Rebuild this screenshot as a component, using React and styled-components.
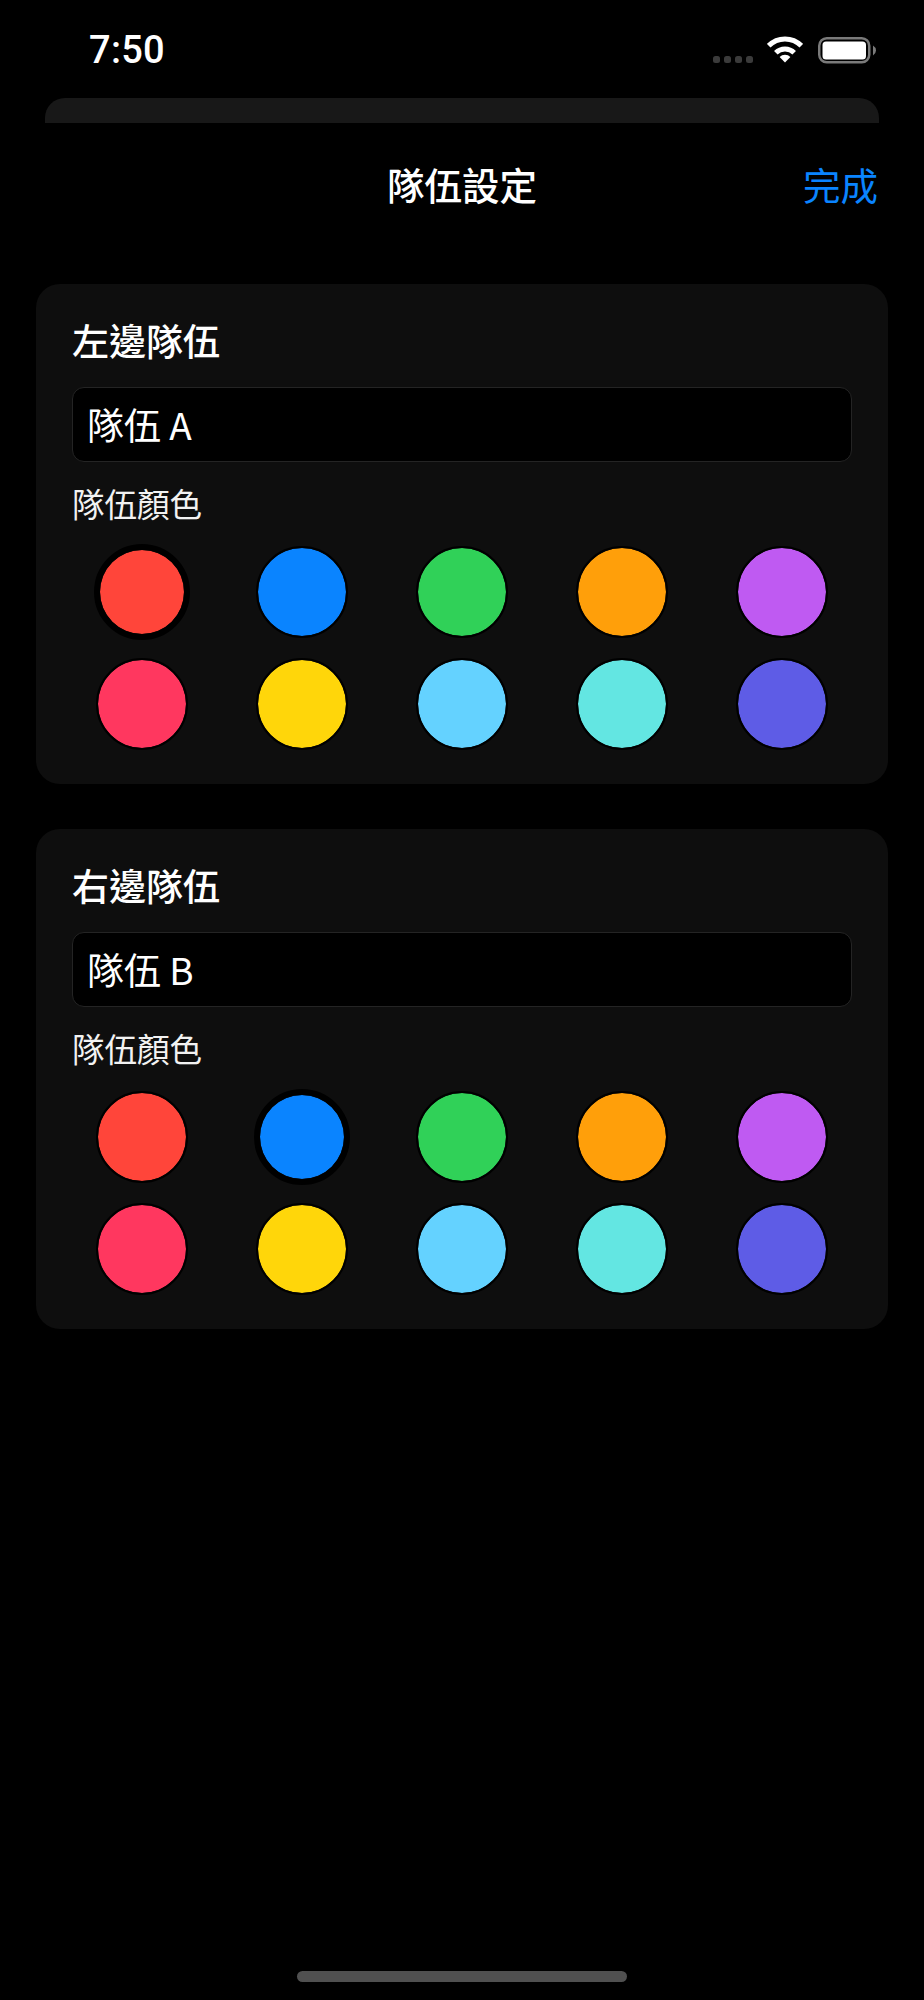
import React from "react";
import styled, { createGlobalStyle } from "styled-components";

const Global = createGlobalStyle`
  html, body { margin: 0; padding: 0; background: #000; }
  body { font-family: "Noto Sans CJK TC", "Noto Sans", sans-serif; color: #fff; }
  * { box-sizing: border-box; }
`;

const Screen = styled.div`
  width: 924px;
  height: 2000px;
  background: #000;
  display: flex;
  flex-direction: column;
`;

const StatusBar = styled.div`
  height: 98px;
  padding: 36px 48px 0 89px;
  display: flex;
  align-items: flex-start;
  justify-content: space-between;
`;

const Time = styled.div`
  font-family: "Roboto", "Liberation Sans", sans-serif;
  font-size: 38px;
  font-weight: 500;
  line-height: 28px;
  letter-spacing: 0.3px;
`;

const StatusIcons = styled.div`
  display: flex;
  align-items: flex-start;
`;

const SignalDots = styled.div`
  display: flex;
  gap: 3.5px;
  margin: 19.5px 14px 0 0;
`;

const SignalDot = styled.span`
  width: 7.5px;
  height: 7.5px;
  border-radius: 2.5px;
  background: #3b3b3b;
`;

const WifiIcon = styled.svg`
  display: block;
  width: 36px;
  height: 27px;
  margin-right: 15px;
`;

const BatteryIcon = styled.svg`
  display: block;
  width: 58px;
  height: 27px;
  margin-top: 1px;
`;

const SheetEdge = styled.div`
  height: 25px;
  margin: 0 45px;
  background: #181818;
  border-radius: 20px 20px 0 0;
`;

const Header = styled.header`
  height: 124px;
  padding: 0 46px 3px;
  display: grid;
  grid-template-columns: 1fr auto 1fr;
  align-items: center;
`;

const Title = styled.h1`
  margin: 0;
  font-size: 37.5px;
  font-weight: 500;
  line-height: 46px;
`;

const DoneButton = styled.button`
  justify-self: end;
  padding: 0;
  border: 0;
  background: none;
  font-family: inherit;
  font-size: 37.5px;
  font-weight: 400;
  line-height: 46px;
  color: #0a84ff;
`;

const Content = styled.main`
  padding: 37px 36px 0;
  display: flex;
  flex-direction: column;
  gap: 45px;
`;

const Card = styled.section`
  height: 500px;
  padding: 33px 36px 35px;
  background: #0e0e0e;
  border-radius: 24px;
`;

const CardTitle = styled.h2`
  margin: 0 0 24px;
  font-size: 37px;
  font-weight: 500;
  line-height: 46px;
`;

const NameField = styled.div`
  height: 75px;
  padding: 0 14px 2px;
  display: flex;
  align-items: center;
  background: #000;
  border: 1px solid #242424;
  border-radius: 12px;
  font-size: 37px;
  font-weight: 400;
  line-height: 46px;
`;

const ColorLabel = styled.div`
  margin: 19px 0 22px;
  font-size: 32.5px;
  font-weight: 400;
  line-height: 44px;
  color: #f2f2f2;
`;

const Swatches = styled.div`
  display: grid;
  grid-template-columns: repeat(5, 140px);
  grid-auto-rows: 90px;
  column-gap: 20px;
  row-gap: 22px;
`;

const Swatch = styled.button`
  justify-self: center;
  align-self: center;
  padding: 0;
  width: ${(p) => (p.$selected ? "96px" : "92px")};
  height: ${(p) => (p.$selected ? "96px" : "92px")};
  border-radius: 50%;
  border: ${(p) => (p.$selected ? "6.5px" : "2.5px")} solid #000;
  background: ${(p) => p.$color};
  background-clip: padding-box;
`;

const HomeIndicator = styled.div`
  width: 330px;
  height: 11px;
  margin: auto auto 18px;
  background: #505050;
  border-radius: 6px;
`;

const COLORS = [
  "#ff453a", "#0a84ff", "#30d158", "#ff9f0a", "#bf5af2",
  "#ff375f", "#ffd60a", "#64d2ff", "#63e6e2", "#5e5ce6",
];

const TEAMS = [
  { side: "左邊隊伍", name: "隊伍 A", selected: 0 },
  { side: "右邊隊伍", name: "隊伍 B", selected: 1 },
];

function Wifi() {
  return (
    <WifiIcon viewBox="0 0 36 27">
      <g fill="none" stroke="#fff" strokeWidth="5">
        <path d="M1.7 9.7 A23 23 0 0 1 34.3 9.7" />
        <path d="M8.8 16.8 A13 13 0 0 1 27.2 16.8" />
      </g>
      <path d="M18 26.5 L12.6 21 A7.6 7.6 0 0 1 23.4 21 Z" fill="#fff" />
    </WifiIcon>
  );
}

function Battery() {
  return (
    <BatteryIcon viewBox="0 0 58 27">
      <rect x="1.25" y="1.25" width="50" height="24" rx="7.5" fill="none" stroke="#7a7a7a" strokeWidth="2.5" />
      <rect x="4.5" y="4.5" width="43.5" height="18" rx="3.5" fill="#fff" />
      <path d="M55 8.5 A6 6 0 0 1 58 13.5 A6 6 0 0 1 55 18.5 Z" fill="#7a7a7a" />
    </BatteryIcon>
  );
}

export default function App() {
  return (
    <Screen>
      <Global />
      <StatusBar>
        <Time>7:50</Time>
        <StatusIcons>
          <SignalDots>
            <SignalDot />
            <SignalDot />
            <SignalDot />
            <SignalDot />
          </SignalDots>
          <Wifi />
          <Battery />
        </StatusIcons>
      </StatusBar>
      <SheetEdge />
      <Header>
        <span />
        <Title>隊伍設定</Title>
        <DoneButton>完成</DoneButton>
      </Header>
      <Content>
        {TEAMS.map((team) => (
          <Card key={team.side}>
            <CardTitle>{team.side}</CardTitle>
            <NameField>{team.name}</NameField>
            <ColorLabel>隊伍顏色</ColorLabel>
            <Swatches>
              {COLORS.map((color, i) => (
                <Swatch key={color} $color={color} $selected={i === team.selected} />
              ))}
            </Swatches>
          </Card>
        ))}
      </Content>
      <HomeIndicator />
    </Screen>
  );
}
